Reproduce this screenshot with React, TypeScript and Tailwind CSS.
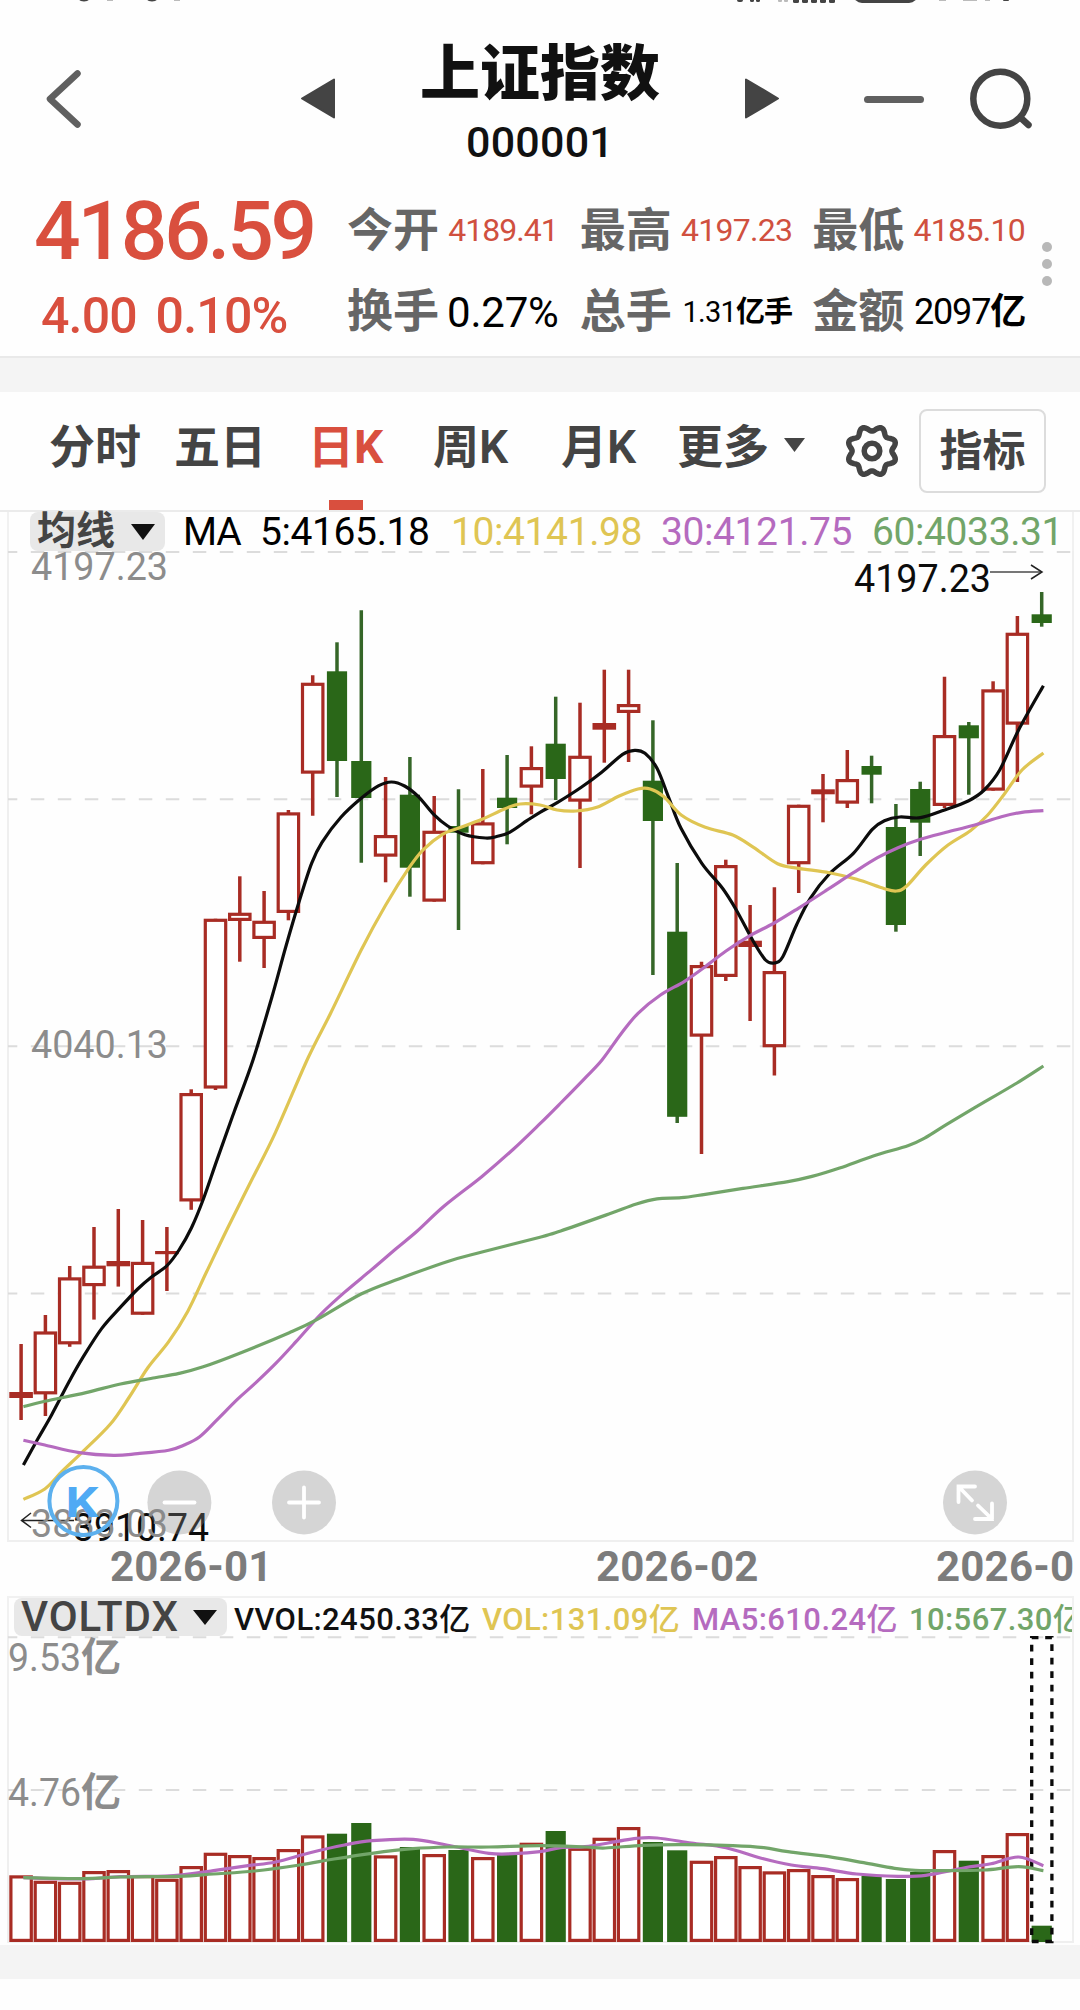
import React from 'react';
import clsx from 'clsx';

type Point = [number, number];
// [direction, high, bodyTop, bodyBottom, low, volumeTop] in chart space
type Bar = ['up' | 'down', number, number, number, number, number];

const UP = '#a82c24';
const DOWN = '#2a6718';
const YELLOW = '#dfc553';
const PURPLE = '#b56bbf';
const GREEN = '#72a569';

const BARS: Bar[] = [
  ['up', 1344, 1392, 1398, 1420, 1875.3],
  ['up', 1315, 1331.4, 1394.4, 1416, 1880.7],
  ['up', 1266, 1277.3, 1344.4, 1346.8, 1881.7],
  ['up', 1227, 1265.6, 1286.2, 1319.6, 1871],
  ['up', 1209, 1261, 1266.3, 1286.6, 1870],
  ['up', 1220, 1261.8, 1314.8, 1314.8, 1875],
  ['up', 1227, 1251, 1254.2, 1291, 1878.7],
  ['up', 1089.3, 1093, 1201.5, 1209.8, 1866],
  ['up', 918.7, 918.7, 1088.6, 1090, 1852.7],
  ['up', 876.3, 912.7, 921, 961.7, 1855],
  ['up', 891, 920.7, 939, 968, 1857],
  ['up', 810, 812.3, 913, 920.3, 1849],
  ['up', 675.3, 682.7, 773.7, 815.7, 1835.3],
  ['down', 642.3, 671.3, 761, 797, 1833.7],
  ['down', 610.3, 761, 798, 862.7, 1823],
  ['up', 777, 835, 856.7, 882.3, 1855.3],
  ['down', 757, 794.7, 867.7, 896.7, 1847],
  ['up', 796, 830.7, 901.7, 901.7, 1854],
  ['down', 789.3, 826, 832.7, 930, 1850],
  ['up', 769, 822.3, 864.3, 864.3, 1857],
  ['down', 755, 797.7, 808, 844.3, 1854.3],
  ['up', 746.3, 767, 787.7, 814.3, 1842.7],
  ['down', 696.7, 743.7, 779, 800, 1831],
  ['up', 702.7, 755.7, 801.7, 868, 1847.7],
  ['up', 669.7, 723, 729.7, 762.7, 1837.7],
  ['up', 669.7, 704, 713, 762, 1827],
  ['down', 720.3, 780.7, 821, 975, 1842],
  ['down', 863, 931.7, 1116.8, 1123, 1850.3],
  ['up', 961.7, 965, 1036.7, 1154, 1860.7],
  ['up', 859.7, 865, 977, 981, 1856],
  ['up', 905, 940.7, 947, 1021, 1866],
  ['up', 887.3, 971, 1047.3, 1075.5, 1871.3],
  ['up', 804.7, 804.7, 864.3, 893, 1869],
  ['up', 774, 789.3, 794.3, 822.3, 1875],
  ['up', 750, 779, 803.7, 808, 1878],
  ['down', 755.7, 766, 774.7, 803.3, 1876],
  ['down', 804, 827, 925, 931.7, 1879],
  ['down', 781.7, 789, 822.7, 856, 1872],
  ['up', 676.7, 735, 806, 808, 1850],
  ['down', 722, 725.3, 738.3, 794.7, 1860.7],
  ['up', 681.3, 689.3, 790.7, 790.7, 1855],
  ['up', 616, 632.7, 724.7, 782, 1833],
  ['down', 592, 614.3, 623, 626.7, 1925.7],
];

const MA5: Point[] = [
  [23.4, 1465], [37.9, 1438.8], [51.7, 1414.7], [68.9, 1382], [82.6, 1357.9], [101.6, 1328.6], [120.5, 1307.2],
  [137.7, 1289], [151.5, 1277], [167, 1265.6], [179, 1250], [191.5, 1227.7], [203.2, 1199.5], [217, 1159.9],
  [234.2, 1111.7], [253, 1060], [272, 996.7], [285.8, 946.7], [299.6, 900], [311.6, 863.3], [322, 842.3],
  [340.9, 817.3], [361.2, 798.3], [378.8, 785.7], [391.5, 782], [404.6, 786], [418.4, 796.7], [433.9, 814.7],
  [447.7, 826], [464.9, 834.7], [485.5, 838], [495.9, 836.7], [509.6, 832.3], [526.9, 820.7], [540, 812.3],
  [557.2, 802.7], [581.3, 787.3], [602, 772], [622.6, 754.3], [634.7, 750.3], [645, 753.3], [657, 768.3],
  [669, 798.3], [681, 828.3], [701.8, 863.3], [722.5, 888.3], [736.3, 910], [753.5, 941.7], [765.5, 960],
  [774.2, 963], [782.8, 956.7], [796.5, 925], [810.3, 898.3], [829.3, 874], [853.4, 853.3], [872.3, 829.3],
  [884.4, 820.7], [899.8, 817], [920.5, 817.7], [944.6, 810], [968.7, 800.7], [984.2, 790], [999.7, 770],
  [1018.6, 730], [1043.4, 685.7],
];

const MA10: Point[] = [
  [23.4, 1499.4], [44.8, 1489], [62, 1471.5], [82.6, 1451.9], [110.2, 1424.3], [129, 1397.5], [148, 1367.5],
  [168.7, 1341.7], [187.7, 1311.4], [206.6, 1271.8], [227.3, 1228.7], [251.4, 1180.5], [275.5, 1132.3],
  [308, 1058], [330.6, 1013.3], [361.2, 950], [385.7, 905], [409.8, 866.7], [423.6, 849.3], [442.5, 834.3],
  [458, 828.3], [482, 819.3], [504.5, 809], [520, 804], [540, 805], [557.2, 810], [576, 811], [596.8, 807.3],
  [619.2, 796], [638, 789], [650.2, 789], [664, 796.7], [681.2, 815], [705.3, 827.3], [732.8, 835],
  [753.5, 847.3], [777.6, 863.7], [798.3, 868.3], [829.3, 872.7], [856.8, 879.3], [884.4, 888.7], [896.4, 891],
  [906.7, 886], [925.7, 865], [948, 845], [970.4, 830.7], [987.7, 815], [1004.9, 793.3], [1022, 770], [1043.4, 753],
];

const MA30: Point[] = [
  [23.4, 1440.2], [44.8, 1445], [79.2, 1452.6], [113.6, 1455.3], [137.7, 1453.6], [168.7, 1450.2], [184.2, 1445],
  [199.7, 1436.7], [217, 1419.9], [237.6, 1399.2], [254.8, 1383.7], [275.5, 1363.7], [296, 1341.7], [320.2, 1314.8],
  [344.4, 1292.4], [371.9, 1269.4], [396, 1248.7], [416.7, 1231.5], [444.2, 1206], [482, 1176.4], [513, 1149.5],
  [540, 1123.7], [560.7, 1103], [584.8, 1078.3], [602, 1060], [620.9, 1034], [638, 1013.3], [660.5, 995],
  [684.6, 981.3], [705.3, 966.7], [726, 951], [750, 935.7], [774.2, 923], [798.3, 908.3], [825.8, 890.7],
  [853.4, 872.7], [877.5, 857.7], [898, 847.7], [920.5, 839.3], [946.3, 832.3], [973.9, 825.3], [1001.4, 816.7],
  [1022, 812.3], [1043.4, 810.7],
];

const MA60: Point[] = [
  [23.4, 1406.8], [44.8, 1401.3], [86, 1392.6], [120.5, 1384], [155, 1377.8], [179, 1373.4], [203.2, 1366.8],
  [241, 1352.7], [289.3, 1332.7], [316.8, 1319.6], [361.6, 1293.8], [399.4, 1278.7], [447.7, 1261.4], [482, 1252],
  [540, 1237.3], [560.7, 1231], [608.9, 1214], [636.4, 1204], [657, 1198.8], [681.2, 1197.7], [705.3, 1194.3],
  [743.2, 1188.4], [788, 1181.6], [812, 1176.4], [839.6, 1168], [874, 1155.7], [908.5, 1145.4], [925.7, 1137.5],
  [946.3, 1124.7], [973.9, 1108.2], [1015.2, 1084], [1043.4, 1066],
];

const VOL_MA5: Point[] = [
  [23.4, 1877.7], [82.6, 1879], [120.5, 1876.7], [165, 1876], [186, 1874.3], [213.5, 1870.7], [248, 1865.7],
  [275.5, 1862], [310, 1852.7], [344.4, 1845], [371.9, 1840.7], [413.2, 1839.3], [447.7, 1845.3], [489, 1853.3],
  [513, 1853.7], [540, 1851.7], [560.7, 1847.7], [584.8, 1846.7], [615.8, 1841.7], [636.4, 1838.3], [657, 1838],
  [691.5, 1843], [726, 1847.7], [760.4, 1858], [791.4, 1865], [822.4, 1868.7], [856.8, 1874], [898, 1876.3],
  [925.7, 1875.3], [963.6, 1868], [991, 1863.7], [1018.7, 1857], [1043.4, 1865.7],
];

const VOL_MA10: Point[] = [
  [23.4, 1877.7], [82.6, 1878.7], [120.5, 1877], [179, 1876.3], [213.5, 1874], [254.8, 1871], [299.6, 1865],
  [334, 1859], [371.9, 1853.3], [413, 1848.7], [447.7, 1847], [489, 1847], [540, 1845.7], [584.8, 1847],
  [605.4, 1848], [643.3, 1845.3], [684.6, 1844.7], [732.8, 1845.7], [763.8, 1847.7], [788, 1851.7],
  [832.7, 1857.3], [863.7, 1862.7], [894.7, 1868.3], [915.3, 1870.3], [946.3, 1870.7], [984.2, 1870],
  [1018.7, 1866.7], [1043.4, 1870.7],
];

const centerX = (i: number) => 21.1 + i * 24.3;

// Catmull-Rom spline through all points
const smooth = (pts: Point[]) => {
  let d = `M${pts[0][0]} ${pts[0][1]}`;
  for (let i = 0; i < pts.length - 1; i++) {
    const p0 = pts[i - 1] ?? pts[i];
    const p1 = pts[i];
    const p2 = pts[i + 1];
    const p3 = pts[i + 2] ?? p2;
    d += `C${p1[0] + (p2[0] - p0[0]) / 6} ${p1[1] + (p2[1] - p0[1]) / 6} ${p2[0] - (p3[0] - p1[0]) / 6} ${p2[1] - (p3[1] - p1[1]) / 6} ${p2[0]} ${p2[1]}`;
  }
  return d;
};

const Curve: React.FC<{ points: Point[]; color: string }> = ({ points, color }) => (
  <path d={smooth(points)} fill="none" stroke={color} strokeWidth={3.2} />
);

const GridLine: React.FC<{ y: number }> = ({ y }) => (
  <line x1={8} x2={1073} y1={y} y2={y} stroke="#dcdcdc" strokeWidth={2} strokeDasharray="13.5 13.5" strokeDashoffset={4.2} />
);

interface LabelProps {
  x: number;
  y: number;
  width: number;
  color: string;
  children: string;
}

const Label: React.FC<LabelProps> = ({ x, y, width, color, children }) => (
  <text x={x} y={y} fontSize={39} fill={color} textLength={width} lengthAdjust="spacingAndGlyphs">
    {children}
  </text>
);

const Body: React.FC<{ x: number; top: number; bottom: number; up: boolean }> = ({ x, top, bottom, up }) => {
  if (!up) return <rect x={x - 10.1} y={top} width={20.2} height={bottom - top} fill={DOWN} />;
  if (bottom - top < 7) return <rect x={x - 11.8} y={top} width={23.6} height={bottom - top} fill={UP} />;
  return (
    <rect x={x - 10.2} y={top + 1.6} width={20.4} height={bottom - top - 3.2} fill="#fff" stroke={UP} strokeWidth={3.2} />
  );
};

const StatusBar = () => (
  <svg className="block h-[4px] w-full" viewBox="0 0 1080 4">
    <g fill="#444">
      <ellipse cx="84" cy="-1" rx="5" ry="2.4" />
      <ellipse cx="152" cy="-1" rx="5" ry="2.4" />
      <rect x="737" y="-2" width="6" height="4" rx="2" />
      <rect x="750" y="-2" width="4" height="4" rx="1.5" />
      <rect x="756" y="-2" width="4" height="4" rx="1.5" />
      {[793, 802, 811, 820, 829].map(x => (
        <rect key={x} x={x} y="-2" width="6" height="5" rx="1.5" />
      ))}
      <rect x="853" y="-20" width="65" height="23" rx="9" />
      <rect x="1003" y="-2" width="6" height="3" rx="1" />
    </g>
    <g fill="#bbb">
      <rect x="107" y="0" width="6" height="1" />
      <rect x="174" y="0" width="6" height="1" />
      <rect x="778" y="-2" width="4" height="4" rx="1" />
      <rect x="784" y="-2" width="4" height="4" rx="1" />
      <rect x="939" y="0" width="7" height="1" />
      <rect x="963" y="0" width="14" height="1" />
      <rect x="985" y="0" width="5" height="1" />
    </g>
  </svg>
);

const Header = () => (
  <header className="flex h-[183px] items-start">
    <svg className="mt-[64px] ml-[43px] h-[62px] w-[40px]" viewBox="43 68 40 62">
      <path d="M77.5 73.5L50 99l27.5 25.500" fill="none" stroke="#606060" strokeWidth="6.500" strokeLinecap="round" strokeLinejoin="round" />
    </svg>
    <svg className="mt-[72px] ml-[216px] h-[46px] w-[38px]" viewBox="299 76 38 46">
      <path d="M302 98.500L334 79.500V117.500Z" fill="#444" stroke="#444" strokeWidth="2" strokeLinejoin="round" />
    </svg>
    <div className="ml-[73px] flex w-[260px] flex-col items-center text-[#111]">
      <h1 className="mt-[41px] text-[60px] leading-none font-black">上证指数</h1>
      <span className="mt-[16px] text-[43px] leading-none font-medium tracking-[0.2px]">000001</span>
    </div>
    <svg className="mt-[72px] ml-[73px] h-[46px] w-[38px]" viewBox="743 76 38 46">
      <path d="M778 98.500L746 79.500V117.500Z" fill="#444" stroke="#444" strokeWidth="2" strokeLinejoin="round" />
    </svg>
    <div className="mt-[92px] ml-[83px] h-[7px] w-[60px] rounded-full bg-[#606060]" />
    <svg className="mt-[62px] ml-[44px] h-[66px] w-[66px]" viewBox="968 66 66 66">
      <circle cx="1000.300" cy="98.700" r="27" fill="none" stroke="#444" strokeWidth="6.500" />
      <path d="M1022 119l6.500 6" stroke="#444" strokeWidth="6.500" strokeLinecap="round" />
    </svg>
  </header>
);

const Stat: React.FC<{ label: string; children: React.ReactNode }> = ({ label, children }) => (
  <div className="flex h-[46px] items-center justify-between leading-none whitespace-nowrap">
    <span className="text-[46px] font-bold text-[#666]">{label}</span>
    {children}
  </div>
);

const Quote = () => (
  <section className="flex h-[171px] items-start border-b-2 border-[#e9e9e9]">
    <div className="ml-[34px] w-[313px] text-[#d94f3e]">
      <div className="mt-[3px] text-[82px] leading-none font-medium tracking-[-3.2px]">4186.59</div>
      <div className="mt-[19px] ml-[7px] text-[50px] leading-none font-medium tracking-[-0.8px] [word-spacing:7px]">4.00 0.10%</div>
    </div>
    <div className="mt-[20px] grid w-[678px] grid-cols-3 gap-x-[20px] gap-y-[35px] text-black">
      <Stat label="今开"><span className="mr-[2px] text-[32px] tracking-[-1px] text-[#d0503f]">4189.41</span></Stat>
      <Stat label="最高"><span className="text-[32px] tracking-[-0.7px] text-[#d0503f]">4197.23</span></Stat>
      <Stat label="最低"><span className="text-[32px] tracking-[-0.7px] text-[#d0503f]">4185.10</span></Stat>
      <Stat label="换手"><span className="mt-[4px] mr-[1px] text-[42px] tracking-[-0.2px]">0.27%</span></Stat>
      <Stat label="总手"><span className="mt-[3px] text-[29px] tracking-[-0.8px]">1.31<b>亿手</b></span></Stat>
      <Stat label="金额"><span className="mt-[1px] text-[36px] tracking-[-1.2px]">2097<b>亿</b></span></Stat>
    </div>
    <div className="mt-[55px] ml-[17px] flex flex-col gap-[7px]">
      <i className="size-[10px] rounded-full bg-[#b8b8b8]" />
      <i className="size-[10px] rounded-full bg-[#b8b8b8]" />
      <i className="size-[10px] rounded-full bg-[#b8b8b8]" />
    </div>
  </section>
);

const TABS = [
  { name: '分时', box: 'ml-[49px] w-[125px]' },
  { name: '五日', box: 'w-[134px]' },
  { name: '日K', box: 'w-[125px]', active: true },
  { name: '周K', box: 'w-[128px]' },
  { name: '月K', box: 'w-[116px]' },
  { name: '更多', box: 'w-[107px]' },
];

// Eight-lobed outline around (0, 0)
const GEAR = (() => {
  let d = '';
  for (let i = 0; i <= 144; i++) {
    const a = (i / 144) * Math.PI * 2;
    const r = 22.4 - 2.5 * Math.cos(8 * a);
    d += `${i ? 'L' : 'M'}${(r * Math.cos(a)).toFixed(2)} ${(r * Math.sin(a)).toFixed(2)}`;
  }
  return d + 'Z';
})();

const Tabs = () => (
  <nav className="flex h-[120px] items-center border-b-2 border-[#ebebeb] text-[46px] leading-none font-semibold text-[#444]">
    {TABS.map(t => (
      <div key={t.name} className={clsx('relative flex h-full items-center pb-[9px] whitespace-nowrap', t.box, t.active && 'font-bold text-[#d94f3e]')}>
        {t.name}
        {t.active && <span className="absolute bottom-0 left-[21px] h-[10px] w-[34px] bg-[#d94f3e]" />}
      </div>
    ))}
    <svg className="-mt-[12px] h-[14px] w-[21px]" viewBox="0 0 21 14">
      <path d="M0 0H21L10.500 14Z" fill="#444" />
    </svg>
    <svg className="ml-[37px] size-[60px]" viewBox="-30 -30 60 60">
      <path d={GEAR} fill="none" stroke="#444" strokeWidth="5.500" strokeLinejoin="round" />
      <circle r="7.800" fill="none" stroke="#444" strokeWidth="5.500" />
    </svg>
    <button className="ml-[17px] h-[84px] w-[127px] rounded-[8px] border-2 border-[#dcdcdc] text-[43px] leading-none">指标</button>
  </nav>
);

const PriceChart = () => (
  <section>
    <div className="ml-[7px] flex h-[39px] w-[1067px] items-center border-x-2 border-[#f1f1f1] text-[39px] leading-none whitespace-nowrap text-black">
      <div className="ml-[21px] flex h-full w-[135px] items-center rounded-[8px] bg-[#e8e8e8] pl-[7px]">
        <b className="text-[39px] text-[#444]">均线</b>
        <svg className="ml-[16px] h-[16px] w-[24px]" viewBox="0 0 24 16">
          <path d="M0 0H24L12 16Z" fill="#111" />
        </svg>
      </div>
      <span className="mt-[2px] ml-[18px] w-[77px] tracking-[-1.2px]">MA</span>
      <span className="mt-[2px] w-[191px] tracking-[-0.4px]">5:4165.18</span>
      <span className="mt-[2px] w-[210px] tracking-[-0.4px] text-[#dfc553]">10:4141.98</span>
      <span className="mt-[2px] w-[211px] tracking-[-0.4px] text-[#b56bbf]">30:4121.75</span>
      <span className="mt-[2px] tracking-[-0.4px] text-[#72a569]">60:4033.31</span>
    </div>
    <svg className="block h-[991px] w-full" viewBox="0 551 1080 991">
      <path d="M8 551V1541H1073V551" fill="none" stroke="#efefef" strokeWidth="2" />
      <GridLine y={552} />
      <GridLine y={799.3} />
      <GridLine y={1046.3} />
      <GridLine y={1293.5} />
      <Label x={31} y={1058} width={137} color="#8c8c8c">4040.13</Label>
      <Label x={31} y={580} width={137} color="#8c8c8c">4197.23</Label>

      {BARS.map(([dir, high, top, bottom, low], i) => (
        <g key={i}>
          <line x1={centerX(i)} x2={centerX(i)} y1={high} y2={low} stroke={dir === 'up' ? UP : '#356628'} strokeWidth={3.5} />
          <Body x={centerX(i)} top={top} bottom={bottom} up={dir === 'up'} />
        </g>
      ))}
      <Curve points={MA5} color="#0c0c0c" />
      <Curve points={MA10} color={YELLOW} />
      <Curve points={MA30} color={PURPLE} />
      <Curve points={MA60} color={GREEN} />

      <Label x={854} y={592} width={137} color="#0c0c0c">4197.23</Label>
      <path d="M990 572H1042" stroke="#777" strokeWidth="2" />
      <path d="M1031 565L1042 572L1031 579" fill="none" stroke="#222" strokeWidth="1.500" />

      <path d="M74 1520.400H22M31 1513L21.500 1520.400L31 1527.500" fill="none" stroke="#222" strokeWidth="1.500" />
      <Label x={73} y={1541} width={136} color="#0c0c0c">3910.74</Label>
      <Label x={31} y={1537} width={137} color="#8c8c8c">3883.03</Label>

      <circle cx="83.400" cy="1501" r="34" fill="none" stroke="#5cb0ee" strokeWidth="4" />
      <text x="65.500" y="1516.500" fontSize="43" fontWeight="700" fill="#4faaf4" textLength="33" lengthAdjust="spacingAndGlyphs">K</text>

      {[179.4, 304, 975].map(x => (
        <circle key={x} cx={x} cy="1502.500" r="32" fill="#888" fillOpacity="0.340" />
      ))}
      <g fill="none" stroke="#fff" strokeWidth="3.800" strokeLinecap="round">
        <path d="M164.500 1502.500H194.500" />
        <path d="M289 1502.500H319M304 1487.500V1517.500" />
        <path d="M958.500 1502V1486.500H975M958.500 1486.500L972 1500.500" />
        <path d="M992 1503.500V1519H975M992 1519L978 1505.500" />
      </g>
    </svg>
    <div className="flex h-[54px] pt-[4px] text-[42px] leading-none font-bold tracking-[0.2px] text-[#7c7c7c]">
      <span className="ml-[110px] w-[486px]">2026-01</span>
      <span className="w-[340px]">2026-02</span>
      <span>2026-0</span>
    </div>
  </section>
);

const VolumeChart = () => (
  <section>
    <div className="ml-[7px] flex h-[40px] w-[1067px] items-center overflow-hidden border-x-2 border-t-2 border-[#f1f1f1] text-[31px] leading-none font-medium tracking-[0.4px] whitespace-nowrap text-[#111]">
      <div className="ml-[5px] flex h-full w-[213px] shrink-0 items-center rounded-[8px] bg-[#e8e8e8] pl-[7px]">
        <span className="-mt-[1px] w-[161px] text-[42px] tracking-[0.9px] text-[#444]">VOLTDX</span>
        <svg className="ml-[11px] h-[15px] w-[24px]" viewBox="0 0 24 15">
          <path d="M0 0H24L12 15Z" fill="#111" />
        </svg>
      </div>
      <span className="mt-[5px] ml-[7px] w-[248px] shrink-0">VVOL:2450.33亿</span>
      <span className="mt-[5px] w-[210px] shrink-0 text-[#dfc553]">VOL:131.09亿</span>
      <span className="mt-[5px] w-[217px] shrink-0 text-[#b56bbf]">MA5:610.24亿</span>
      <span className="mt-[5px] shrink-0 text-[#72a569]">10:567.30亿</span>
    </div>
    <svg className="block h-[309px] w-full" viewBox="0 1636 1080 309">
      <path d="M8 1636V1942H1073V1636" fill="none" stroke="#efefef" strokeWidth="2" />
      <GridLine y={1637.3} />
      <GridLine y={1790} />
      <Label x={8} y={1671} width={73} color="#8c8c8c">9.53</Label>
      <text x="81" y="1671" fontSize="40" fontWeight="700" fill="#8c8c8c">亿</text>
      <Label x={8} y={1806} width={73} color="#8c8c8c">4.76</Label>
      <text x="81" y="1806" fontSize="40" fontWeight="700" fill="#8c8c8c">亿</text>

      {BARS.map(([dir, , , , , top], i) => (
        <Body key={i} x={centerX(i)} top={top} bottom={1942} up={dir === 'up'} />
      ))}
      <rect x="1031.700" y="1637.500" width="20.200" height="304" fill="none" stroke="#0a0a0a" strokeWidth="3.300" strokeDasharray="6.750 6.750" />
      <Curve points={VOL_MA5} color={PURPLE} />
      <Curve points={VOL_MA10} color={GREEN} />
    </svg>
  </section>
);

export default function App() {
  return (
    <div className="h-[2010px] w-[1080px] overflow-hidden bg-[#fefefe] font-['Roboto','Noto_Sans_CJK_SC',sans-serif]">
      <StatusBar />
      <Header />
      <Quote />
      <div className="h-[34px] bg-[#f4f4f4]" />
      <Tabs />
      <PriceChart />
      <VolumeChart />
      <div className="h-[34px] bg-[#f4f4f4]" />
    </div>
  );
}
